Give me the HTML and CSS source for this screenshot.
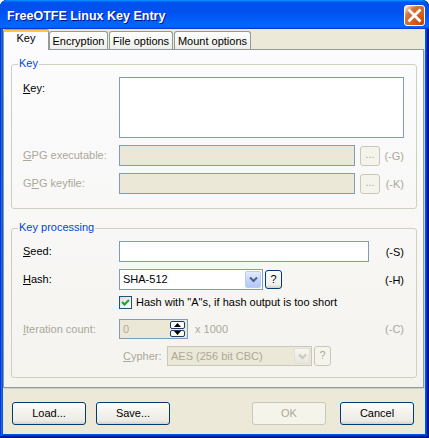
FILE: index.html
```html
<!DOCTYPE html>
<html>
<head>
<meta charset="utf-8">
<link rel="stylesheet" href="styles.css">
</head>
<body>
<div class="window">
  <div class="titlebar">
    <span class="title">FreeOTFE Linux Key Entry</span>
    <div class="close">
      <svg width="19" height="19" viewBox="0 0 19 19"><path d="M4.5 4.5 L14.5 14.5 M14.5 4.5 L4.5 14.5" stroke="#fff" stroke-width="2.8" stroke-linecap="square"/></svg>
    </div>
  </div>
  <div class="client">
    <div class="tabs">
      <div class="tab active">Key</div>
      <div class="tab t-enc">Encryption</div>
      <div class="tab t-file">File options</div>
      <div class="tab t-mount">Mount options</div>
    </div>
    <div class="panel">
      <div class="group g-key">
        <span class="caption">Key</span>
        <div class="row r-memo">
          <span class="lbl top"><u>K</u>ey:</span>
          <div class="memo"></div>
        </div>
        <div class="row r-gpg">
          <span class="lbl dis"><u>G</u>PG executable:</span>
          <div class="edit disabled w-gpg"></div>
          <div class="dots dis-btn">...</div>
          <span class="sfx dis">(-G)</span>
        </div>
        <div class="row r-gpg2">
          <span class="lbl dis">G<u>P</u>G keyfile:</span>
          <div class="edit disabled w-gpg"></div>
          <div class="dots dis-btn">...</div>
          <span class="sfx dis">(-K)</span>
        </div>
      </div>
      <div class="group g-proc">
        <span class="caption cap2">Key processing</span>
        <div class="row r-seed">
          <span class="lbl"><u>S</u>eed:</span>
          <div class="edit w-seed"></div>
          <span class="sfx">(-S)</span>
        </div>
        <div class="row r-hash">
          <span class="lbl"><u>H</u>ash:</span>
          <div class="combo w-hash">
            <span class="ctext">SHA-512</span>
            <span class="arrow">
              <svg width="9" height="7" viewBox="0 0 9 7"><path d="M1 1.5 L4.5 5 L8 1.5" fill="none" stroke="#4d6185" stroke-width="2"/></svg>
            </span>
          </div>
          <div class="qbtn">?</div>
          <span class="sfx">(-H)</span>
        </div>
        <div class="row r-check">
          <span class="checkbox">
            <svg width="11" height="11" viewBox="0 0 11 11"><path d="M2 5 L4.5 7.5 L9 3" fill="none" stroke="#21a121" stroke-width="2"/></svg>
          </span>
          <span class="chklbl">Hash with "A"s, if hash output is too short</span>
        </div>
        <div class="row r-iter">
          <span class="lbl dis"><u>I</u>teration count:</span>
          <div class="edit disabled w-iter">
            <span class="ctext dis">0</span>
            <span class="spin">
              <span class="spinbtn"><svg width="7" height="4" viewBox="0 0 7 4"><path d="M0 4 L3.5 0 L7 4Z" fill="#000"/></svg></span>
              <span class="spinbtn"><svg width="7" height="4" viewBox="0 0 7 4"><path d="M0 0 L3.5 4 L7 0Z" fill="#000"/></svg></span>
            </span>
          </div>
          <span class="mult dis">x 1000</span>
          <span class="sfx dis">(-C)</span>
        </div>
        <div class="row r-cyph">
          <span class="lbl2 dis"><u>C</u>ypher:</span>
          <div class="combo disabled-combo w-cyph">
            <span class="ctext dis">AES (256 bit CBC)</span>
            <span class="arrow dis-arrow">
              <svg width="9" height="7" viewBox="0 0 9 7"><path d="M1 1.5 L4.5 5 L8 1.5" fill="none" stroke="#c9c7ba" stroke-width="2"/></svg>
            </span>
          </div>
          <div class="qbtn q2">?</div>
        </div>
      </div>
    </div>
    <div class="buttons">
      <div class="btn">Load...</div>
      <div class="btn b-save">Save...</div>
      <div class="btn b-ok">OK</div>
      <div class="btn b-cancel">Cancel</div>
    </div>
  </div>
</div>
</body>
</html>
```

FILE: styles.css
```css
* { box-sizing: border-box; }
html, body { margin: 0; padding: 0; background: #fff; }
body {
  font-family: "Liberation Sans", Arial, sans-serif;
  font-size: 11px;
  color: #000;
}
u { text-decoration: underline; text-underline-offset: 1px; }

.window {
  width: 429px;
  height: 438px;
  background: #0054e3;
  display: flex;
  flex-direction: column;
  border-radius: 7px 7px 0 0;
  overflow: hidden;
  box-shadow: inset -1px -1px #00138c, inset 1px 1px #0831d9, inset -2px -2px #001ea0, inset 2px 2px #166aee, inset -3px -3px #003bda, inset 3px 3px #0855dd;
}

.titlebar {
  height: 29px;
  flex: none;
  display: flex;
  align-items: center;
  padding: 1px 4px 0 7px;
  background: linear-gradient(180deg, #0997ff, #0053ee 8%, #0050ee 40%, #06f 88%, #06f 93%, #005bff 95%, #003dd7 96%, #003dd7);
  border-radius: 7px 7px 0 0;
}
.title {
  color: #fff;
  font-weight: bold;
  font-size: 12.5px;
  text-shadow: 1px 1px #0f1089;
  padding-top: 2px;
}
.close {
  margin-left: auto;
  width: 21px;
  height: 21px;
  border: 1px solid #fff;
  border-radius: 3px;
  background: radial-gradient(circle at 90% 90%, #cc4600 0, #dc6527 55%, #cd7546 70%, #ffccb2 90%, #fff 100%);
  display: flex;
  align-items: center;
  justify-content: center;
  margin-top: 1px;
}
.close svg { display: block; }

.client {
  flex: 1;
  margin: 0 4px 4px 3px;
  background: #ece9d8;
  display: flex;
  flex-direction: column;
}

.tabs {
  height: 20px;
  flex: none;
  display: flex;
  align-items: flex-end;
  position: relative;
  z-index: 1;
}
.tab {
  height: 18px;
  border: 1px solid #919b9c;
  border-bottom: 0;
  border-radius: 3px 3px 0 0;
  background: linear-gradient(180deg, #fff, #fafaf9 26%, #f0f0ea 95%, #ecebe5);
  text-align: center;
  line-height: 15px;
  padding-top: 2px;
  white-space: nowrap;
}
.tab.active {
  width: 46px;
  height: 21px;
  margin-bottom: -1px;
  border-top: 0;
  padding-top: 3px;
  line-height: 12px;
  background: linear-gradient(180deg, #e68b2c 0, #e68b2c 1px, #ffc73c 1px, #ffc73c 3px, #fcfcfe 3px);
}
.t-enc { width: 59px; }
.t-file { width: 64px; margin-left: 1px; }
.t-mount { width: 77px; margin-left: 1px; }

.panel {
  width: 421px;
  height: 339px;
  flex: none;
  border: 1px solid #919b9c;
  background: linear-gradient(180deg, #fcfcfe, #f4f3ee);
  padding: 14px 0 9px 7px;
  display: flex;
  flex-direction: column;
  box-shadow: 1px 1px 0 #d0cec4;
}

.group {
  width: 406px;
  position: relative;
  border: 1px solid #d0d0bf;
  border-radius: 3px;
  padding: 12px 12px 14px 11px;
  display: flex;
  flex-direction: column;
}
.g-proc {
  margin-top: 19px;
  padding-bottom: 11px;
}
.caption {
  position: absolute;
  top: -8px;
  left: 6px;
  padding: 0 1px;
  line-height: 13px;
  color: #0046d5;
  background: #fcfcfe;
}
.cap2 { background: #f9f8f6; }

.row {
  display: flex;
  align-items: center;
}
.lbl { width: 96px; flex: none; line-height: 13px; white-space: nowrap; }
.lbl.top { align-self: flex-start; margin-top: 5px; }
.lbl2 { width: 44px; flex: none; white-space: nowrap; }
.dis { color: #aca899; }

.r-memo { align-items: flex-start; }
.memo {
  width: 285px;
  height: 61px;
  border: 1px solid #7f9db9;
  background: #fff;
}
.r-gpg { margin-top: 7px; }
.r-gpg2 { margin-top: 7px; }

.edit {
  height: 21px;
  border: 1px solid #7f9db9;
  background: #fff;
  flex: none;
}
.edit.disabled { background: #ebe8d7; }
.w-gpg { width: 236px; }
.w-seed { width: 250px; }

.dots {
  width: 20px;
  height: 20px;
  margin-left: 5px;
  border-radius: 3px;
  text-align: center;
  line-height: 15px;
  flex: none;
}
.dis-btn {
  border: 1px solid #c9c7ba;
  background: #f5f4ea;
  color: #aca899;
}
.sfx {
  margin-left: auto;
  white-space: nowrap;
}

.r-hash { margin-top: 7px; }
.combo {
  height: 21px;
  border: 1px solid #7f9db9;
  background: #fff;
  display: flex;
  align-items: center;
  padding: 1px 1px 1px 3px;
  flex: none;
}
.w-hash { width: 144px; }
.ctext { flex: 1; white-space: nowrap; line-height: 13px; }
.arrow {
  width: 16px;
  align-self: stretch;
  border: 1px solid #b9cdf7;
  border-radius: 2px;
  background: linear-gradient(180deg, #e4ecfd, #c1d3fb 60%, #b4c8f6);
  display: flex;
  align-items: center;
  justify-content: center;
}
.qbtn {
  width: 17px;
  height: 19px;
  margin-left: 2px;
  border: 1px solid #003c74;
  border-radius: 3px;
  background: linear-gradient(180deg, #fff, #f0f0ea 80%, #d6d0c5);
  text-align: center;
  line-height: 16px;
  flex: none;
}
.qbtn.q2 {
  height: 20px;
  border-color: #c9c7ba;
  background: #f5f4ea;
  color: #aca899;
}

.r-check { margin-top: 6px; padding-left: 96px; }
.checkbox {
  width: 13px;
  height: 13px;
  border: 1px solid #1c5180;
  background: linear-gradient(135deg, #dcdcd7, #fff);
  display: flex;
  align-items: center;
  justify-content: center;
  flex: none;
}
.checkbox svg { display: block; }
.chklbl { margin-left: 4px; line-height: 13px; white-space: nowrap; }

.r-iter { margin-top: 10px; }
.w-iter {
  width: 69px;
  height: 20px;
  display: flex;
  align-items: center;
  padding: 1px 1px 1px 3px;
}
.spin {
  width: 15px;
  align-self: stretch;
  display: flex;
  flex-direction: column;
  gap: 1px;
  margin-right: 1px;
}
.spinbtn {
  flex: 1;
  border: 1px solid #1c3d6c;
  border-radius: 2px;
  background: #fff;
  display: flex;
  align-items: center;
  justify-content: center;
}
.spinbtn svg { display: block; }
.mult { margin-left: 7px; }

.r-cyph { margin-top: 7px; padding-left: 100px; }
.w-cyph { width: 145px; height: 20px; }
.disabled-combo {
  border-color: #c9c7ba;
  background: #ebe8d7;
}
.dis-arrow {
  border-color: #e3e1d6;
  background: linear-gradient(180deg, #f7f6f1, #e8e6dc);
}

.buttons {
  flex: 1;
  display: flex;
  align-items: flex-start;
  padding: 14px 11px 0 9px;
}
.btn {
  width: 74px;
  height: 23px;
  border: 1px solid #003c74;
  border-radius: 3px;
  background: linear-gradient(180deg, #fff, #f4f3ee 40%, #ecebe6 85%, #d6d0c5);
  text-align: center;
  line-height: 20px;
  flex: none;
}
.b-save { margin-left: 10px; }
.btn.b-ok {
  margin-left: auto;
  border-color: #c9c7ba;
  background: #f5f4ea;
  color: #aca899;
}
.b-cancel { margin-left: 14px; }
```
